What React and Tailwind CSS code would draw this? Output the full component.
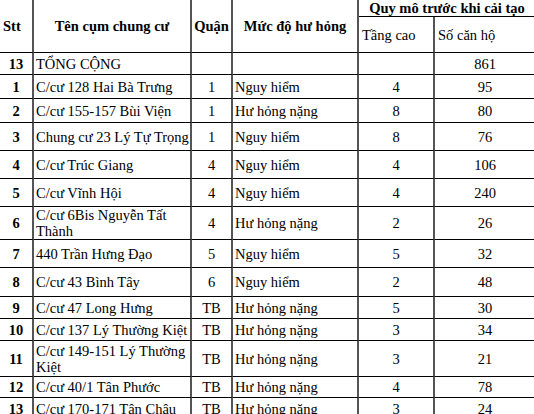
const rows = [
  { stt: "1", name: "C/cư 128 Hai Bà Trưng", q: "1", m: "Nguy hiểm", t: "4", s: "95", h: "h-[24px]" },
  { stt: "2", name: "C/cư 155-157 Bùi Viện", q: "1", m: "Hư hỏng nặng", t: "8", s: "80", h: "h-[24px]" },
  { stt: "3", name: "Chung cư 23 Lý Tự Trọng", q: "1", m: "Nguy hiểm", t: "8", s: "76", h: "h-[28px]" },
  { stt: "4", name: "C/cư Trúc Giang", q: "4", m: "Nguy hiểm", t: "4", s: "106", h: "h-[28px]" },
  { stt: "5", name: "C/cư Vĩnh Hội", q: "4", m: "Nguy hiểm", t: "4", s: "240", h: "h-[28px]" },
  { stt: "6", name: "C/cư 6Bis Nguyễn Tất Thành", q: "4", m: "Hư hỏng nặng", t: "2", s: "26", h: "h-[33px]" },
  { stt: "7", name: "440 Trần Hưng Đạo", q: "5", m: "Nguy hiểm", t: "5", s: "32", h: "h-[28px]" },
  { stt: "8", name: "C/cư 43 Bình Tây", q: "6", m: "Nguy hiểm", t: "2", s: "48", h: "h-[29px]" },
  { stt: "9", name: "C/cư 47 Long Hưng", q: "TB", m: "Hư hỏng nặng", t: "5", s: "30", h: "h-[22px]" },
  { stt: "10", name: "C/cư 137 Lý Thường Kiệt", q: "TB", m: "Hư hỏng nặng", t: "3", s: "34", h: "h-[22px]" },
  { stt: "11", name: "C/cư 149-151 Lý Thường Kiệt", q: "TB", m: "Hư hỏng nặng", t: "3", s: "21", h: "h-[36px]" },
  { stt: "12", name: "C/cư 40/1 Tân Phước", q: "TB", m: "Hư hỏng nặng", t: "4", s: "78", h: "h-[21px]" },
  { stt: "13", name: "C/cư 170-171 Tân Châu", q: "TB", m: "Hư hỏng nặng", t: "3", s: "24", h: "h-[22px]" },
];

const font = "font-['Liberation_Serif','Times_New_Roman',serif] text-[14.5px] leading-[16px]";
const cell = `${font} border-b border-b-black border-r-2 border-r-[#555] p-0 align-middle`;

export default function App() {
  return (
    <div className="w-[534px] h-[414px] overflow-hidden bg-white text-black">
      <table className={`${font} table-fixed border-separate border-spacing-0 w-[537px]`}>
        <colgroup>
          <col className="w-[34px]" />
          <col className="w-[158px]" />
          <col className="w-[41px]" />
          <col className="w-[126px]" />
          <col className="w-[76px]" />
          <col className="w-[102px]" />
        </colgroup>
        <thead>
          <tr className="h-[17px]">
            <th rowSpan={2} className={`${cell} text-left pl-[3px]`}>Stt</th>
            <th rowSpan={2} className={cell}>Tên cụm chung cư</th>
            <th rowSpan={2} className={cell}>Quận</th>
            <th rowSpan={2} className={cell}>Mức độ hư hỏng</th>
            <th colSpan={2} className={`${cell} border-r-0`}>Quy mô trước khi cải tạo</th>
          </tr>
          <tr className="h-[36px]">
            <td className={`${cell} text-left pl-[3px]`}>Tầng cao</td>
            <td className={`${cell} text-left pl-[3px] border-r-0`}>Số căn hộ</td>
          </tr>
        </thead>
        <tbody>
          <tr className="h-[22px]">
            <td className={`${cell} text-center font-bold`}>13</td>
            <td className={`${cell} pl-[2px]`}>TỔNG CỘNG</td>
            <td className={cell}></td>
            <td className={cell}></td>
            <td className={cell}></td>
            <td className={`${cell} text-center border-r-0`}>861</td>
          </tr>
          {rows.map((r) => (
            <tr key={r.stt} className={r.h}>
              <td className={`${cell} text-center font-bold`}>{r.stt}</td>
              <td className={`${cell} pl-[2px]`}>{r.name}</td>
              <td className={`${cell} text-center`}>{r.q}</td>
              <td className={`${cell} pl-[2px]`}>{r.m}</td>
              <td className={`${cell} text-center`}>{r.t}</td>
              <td className={`${cell} text-center border-r-0`}>{r.s}</td>
            </tr>
          ))}
        </tbody>
      </table>
    </div>
  );
}
